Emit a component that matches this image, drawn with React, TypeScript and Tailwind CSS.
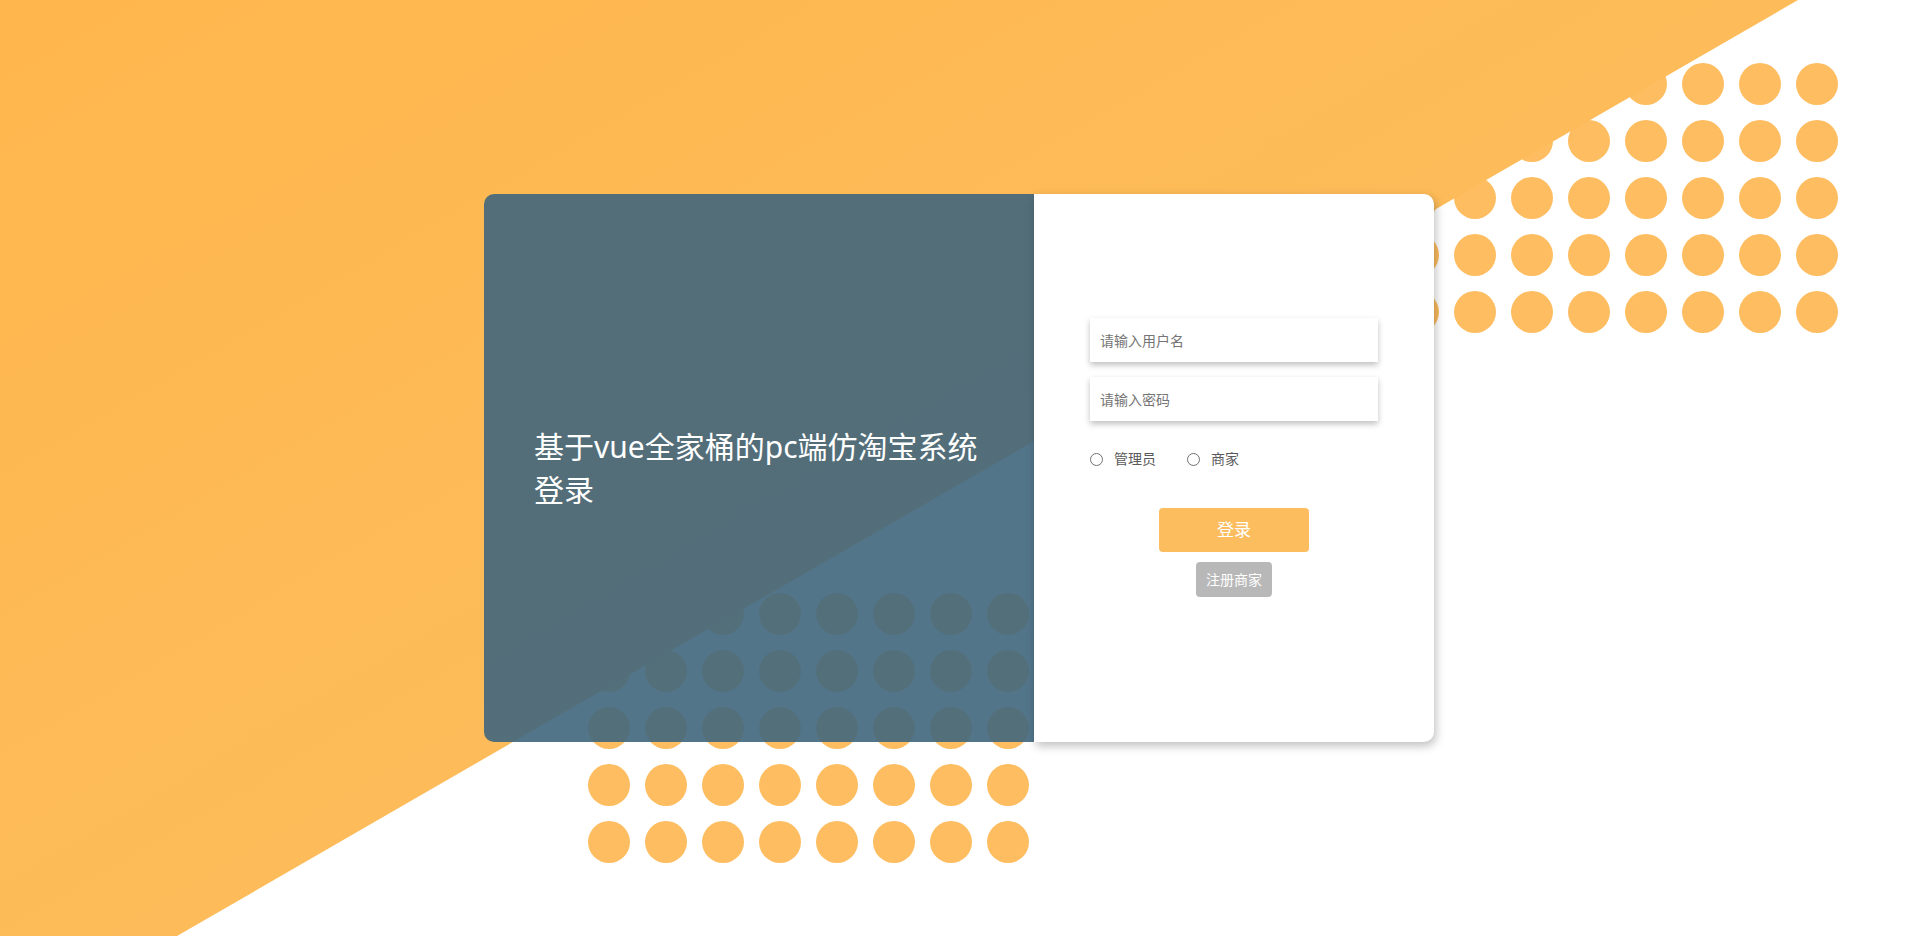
import { useState } from 'react';

// dot pattern used in the page background
function DotGrid({ className }: { className: string }) {
  return (
    <div className={`absolute grid grid-cols-8 gap-[15px] ${className}`}>
      {Array.from({ length: 40 }).map((_, i) => (
        <div key={i} className="w-[42px] h-[42px] rounded-full bg-[#fdbd60]" />
      ))}
    </div>
  );
}

function Radio({ label, checked, onChange }: { label: string; checked: boolean; onChange: () => void }) {
  return (
    <label className="flex items-center cursor-pointer" onClick={onChange}>
      <span className="w-[13px] h-[13px] rounded-full border border-[#707070] bg-white flex items-center justify-center">
        {checked && <span className="w-[5px] h-[5px] rounded-full bg-[#409eff]" />}
      </span>
      <span className="ml-[11px] text-[14px] leading-[20px] text-[#5a5a5a]">{label}</span>
    </label>
  );
}

export default function App() {
  const [role, setRole] = useState('');

  return (
    <div className="relative h-screen w-full overflow-hidden bg-white flex items-center justify-center font-['Noto_Sans','Noto_Sans_CJK_SC',sans-serif]">
      {/* background: dots under the orange diagonal */}
      <DotGrid className="left-[1397px] top-[63px]" />
      <DotGrid className="left-[588px] top-[593px]" />
      <div className="absolute inset-0 bg-[linear-gradient(150deg,#ffb64c_0%,#fdbb58_45%,#fdbf62_100%)] [clip-path:polygon(0_0,1798px_0,177px_100%,0_100%)]" />

      {/* login card */}
      <div className="relative z-10 flex w-[950px] h-[548px]">
        <div className="w-[550px] h-full rounded-l-[10px] bg-[rgba(64,102,125,0.9)] flex items-center px-[50px]">
          <h1 className="text-[30px] leading-[43px] font-normal text-white">基于vue全家桶的pc端仿淘宝系统登录</h1>
        </div>
        <div className="w-[400px] h-full rounded-r-[10px] bg-white shadow-[2px_4px_10px_rgba(0,0,0,0.25)] flex flex-col px-[56px] pt-[124px]">
          <input
            type="text"
            placeholder="请输入用户名"
            className="h-[44px] w-full bg-white px-[10px] text-[14px] text-[#333] outline-none placeholder:text-[#757575] shadow-[0_3px_6px_rgba(0,0,0,0.25)]"
          />
          <input
            type="password"
            placeholder="请输入密码"
            className="mt-[15px] h-[44px] w-full bg-white px-[10px] text-[14px] text-[#333] outline-none placeholder:text-[#757575] shadow-[0_3px_6px_rgba(0,0,0,0.25)]"
          />
          <div className="mt-[28px] h-[20px] flex items-center gap-[31px]">
            <Radio label="管理员" checked={role === 'admin'} onChange={() => setRole('admin')} />
            <Radio label="商家" checked={role === 'seller'} onChange={() => setRole('seller')} />
          </div>
          <button className="mt-[39px] self-center w-[150px] h-[44px] rounded-[4px] bg-[#fcbd5f] text-white text-[17px]">
            登录
          </button>
          <button className="mt-[10px] self-center w-[76px] h-[35px] rounded-[4px] bg-[#b8b8b8] text-white text-[14px]">
            注册商家
          </button>
        </div>
      </div>
    </div>
  );
}
